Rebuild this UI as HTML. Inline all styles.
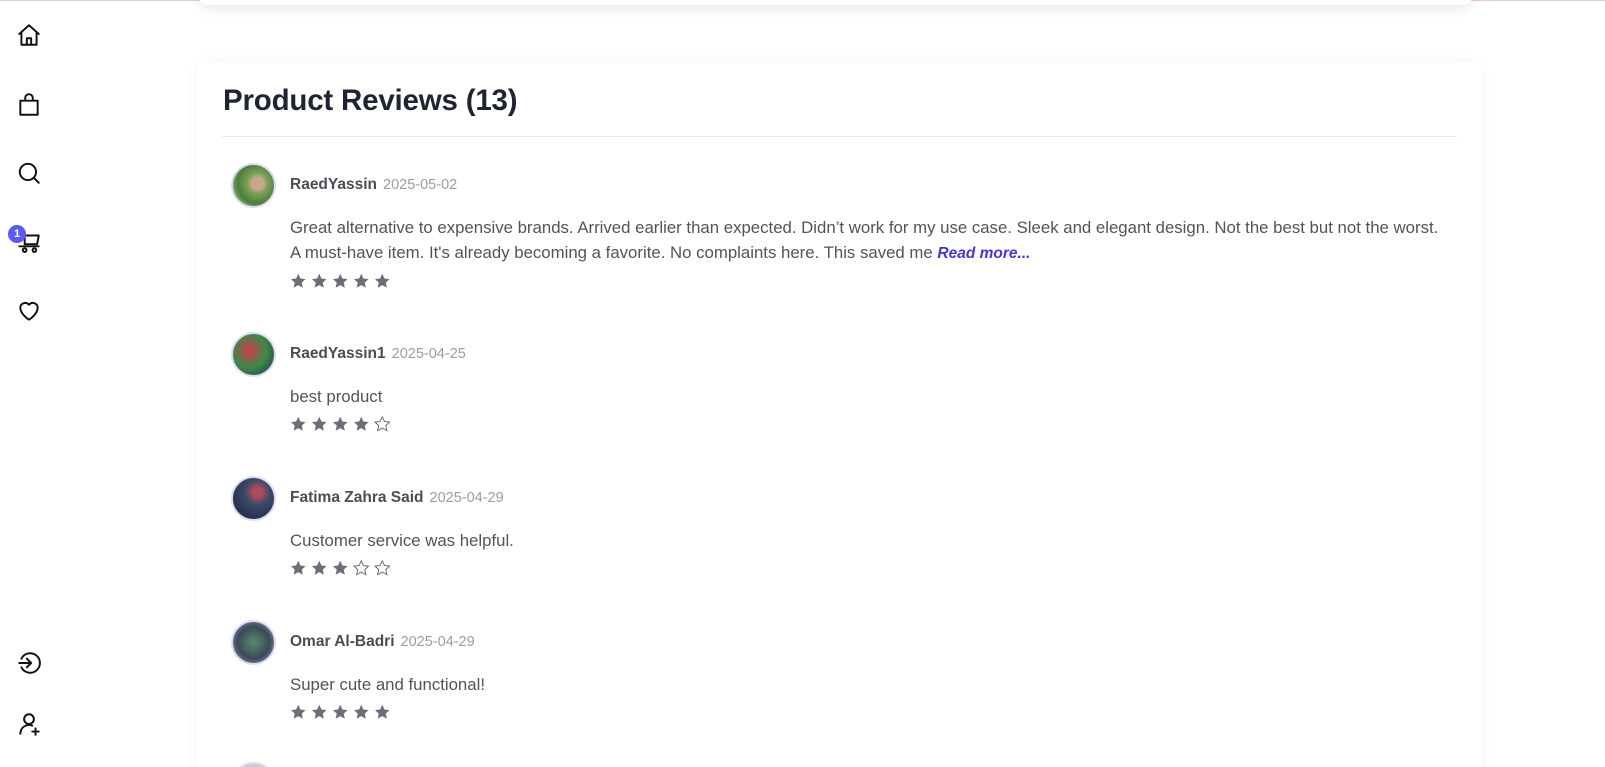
<!DOCTYPE html>
<html style="width:1605px;height:767px;overflow:hidden"><head><meta charset="utf-8"><style>
*{margin:0;padding:0;box-sizing:border-box}
body{width:1605px;height:767px;overflow:hidden;background:#fff;font-family:"Liberation Sans",sans-serif;position:relative}
#w{position:absolute;left:0;top:0;width:1605px;height:767px;overflow:hidden}
.topline{position:absolute;left:0;top:0;width:1605px;height:1px;background:#e8c9cf}
.topcard{position:absolute;left:198px;top:-20px;width:1275px;height:25px;background:#fff;border-radius:10px;box-shadow:0 4px 12px rgba(0,0,0,.09)}
.side svg{position:absolute;left:16px;width:26px;height:26px;fill:none;stroke:#111;stroke-width:1.8;stroke-linecap:round;stroke-linejoin:round}
.badge{position:absolute;left:8px;top:225px;width:18px;height:18px;border-radius:50%;background:#5b5bf0;color:#fff;font-size:11px;font-weight:bold;text-align:center;line-height:18px}
.card{position:absolute;left:197px;top:62px;width:1284px;height:730px;background:#fff;border-radius:8px;box-shadow:0 0 14px rgba(0,0,0,.045)}
h2{position:absolute;left:223px;top:84px;font-size:29.5px;font-weight:bold;color:#1f2433;letter-spacing:-.2px}
.hr{position:absolute;left:222px;top:136px;width:1235px;height:1px;background:#e9ebef}
.rev{position:absolute;left:231px}
.av{position:absolute;left:0;top:0;width:45px;height:45px;border-radius:50%;border:2px solid #dcdcf5}
.nm{position:absolute;left:59px;top:13px;font-size:15.5px;font-weight:bold;color:#4a4d55;white-space:nowrap}
.nm span{font-weight:normal;color:#9a9ca3;font-size:14.5px;margin-left:6px}
.tx{position:absolute;left:59px;top:52px;font-size:16.8px;color:#51545b;line-height:25px;white-space:nowrap}
.tx i{color:#4338ca;font-weight:bold;font-size:15.5px}
.st{position:absolute;left:59px;display:flex;gap:4.5px}
.st svg{width:16.5px;height:16.5px}
</style></head><body><div id="w">
<div class="topline"></div>
<div class="topcard"></div>
<div class="side">
<svg style="top:22px" viewBox="0 0 24 24"><path d="M3 11L12 3l9 8M5 9.5V21h14V9.5M10 21v-6h4v6"/></svg>
<svg style="top:92px" viewBox="0 0 24 24"><path d="M4 8h16v13H4zM8.5 8V5.5a3.5 3.5 0 0 1 7 0V8"/></svg>
<svg style="top:160px" viewBox="0 0 24 24"><circle cx="11" cy="11" r="7.5"/><path d="M16.5 16.5L21 21"/></svg>
<svg style="top:229px" viewBox="0 0 24 24"><path d="M8 6h13l-1.5 8H8zM3 16h18"/><circle cx="8" cy="19.5" r="1.7"/><circle cx="17" cy="19.5" r="1.7"/></svg>
<svg style="top:298px" viewBox="0 0 24 24"><path d="M12 20s-8-5-8-11a4.5 4.5 0 0 1 8-2.8A4.5 4.5 0 0 1 20 9c0 6-8 11-8 11z"/></svg>
<svg style="top:650px" viewBox="0 0 24 24"><path d="M5 8a9 9 0 1 1 0 8"/><path d="M3 12h11M10 8l4 4-4 4"/></svg>
<svg style="top:711px" viewBox="0 0 24 24"><circle cx="12" cy="7.5" r="4.5"/><path d="M4 21a8 8 0 0 1 11-7.5M18 16v6M15 19h6"/></svg>
</div>
<div class="badge">1</div>
<div class="card"></div>
<h2>Product Reviews (13)</h2>
<div class="hr"></div>

<svg width="0" height="0" style="position:absolute"><defs>
<path id="s" d="M8.25 .8l2.2 4.7 5.1.6-3.8 3.5 1.1 5.1-4.6-2.6-4.6 2.6 1.1-5.1L1 6.1l5.1-.6z"/></defs></svg>

<div class="rev" style="top:163px">
<div class="av" style="background:radial-gradient(circle at 60% 45%,#c9a88a 0 18%,#7aa35a 30%,#4e7d3a 60%,#cfd8c8)"></div>
<div class="nm">RaedYassin<span>2025-05-02</span></div>
<div class="tx">Great alternative to expensive brands. Arrived earlier than expected. Didn’t work for my use case. Sleek and elegant design. Not the best but not the worst.<br>A must-have item. It's already becoming a favorite. No complaints here. This saved me <i>Read more...</i></div>
<div class="st" style="top:110px">
<svg><use href="#s" fill="#6b6e78"/></svg><svg><use href="#s" fill="#6b6e78"/></svg><svg><use href="#s" fill="#6b6e78"/></svg><svg><use href="#s" fill="#6b6e78"/></svg><svg><use href="#s" fill="#6b6e78"/></svg></div>
</div>

<div class="rev" style="top:332px">
<div class="av" style="background:radial-gradient(circle at 40% 40%,#d23a4a,#3a8a4a 50%,#2a2a4a)"></div>
<div class="nm">RaedYassin1<span>2025-04-25</span></div>
<div class="tx">best product</div>
<div class="st" style="top:84px">
<svg><use href="#s" fill="#6b6e78"/></svg><svg><use href="#s" fill="#6b6e78"/></svg><svg><use href="#s" fill="#6b6e78"/></svg><svg><use href="#s" fill="#6b6e78"/></svg><svg><use href="#s" fill="none" stroke="#6b6e78"/></svg></div>
</div>

<div class="rev" style="top:476px">
<div class="av" style="background:radial-gradient(circle at 60% 35%,#b04a5a 0 12%,#3a4a6a 35%,#1a2238)"></div>
<div class="nm">Fatima Zahra Said<span>2025-04-29</span></div>
<div class="tx">Customer service was helpful.</div>
<div class="st" style="top:84px">
<svg><use href="#s" fill="#6b6e78"/></svg><svg><use href="#s" fill="#6b6e78"/></svg><svg><use href="#s" fill="#6b6e78"/></svg><svg><use href="#s" fill="none" stroke="#6b6e78"/></svg><svg><use href="#s" fill="none" stroke="#6b6e78"/></svg></div>
</div>

<div class="rev" style="top:620px">
<div class="av" style="background:radial-gradient(circle at 50% 50%,#5a8a6a,#3a4a5a 55%,#a8b4c8)"></div>
<div class="nm">Omar Al-Badri<span>2025-04-29</span></div>
<div class="tx">Super cute and functional!</div>
<div class="st" style="top:84px">
<svg><use href="#s" fill="#6b6e78"/></svg><svg><use href="#s" fill="#6b6e78"/></svg><svg><use href="#s" fill="#6b6e78"/></svg><svg><use href="#s" fill="#6b6e78"/></svg><svg><use href="#s" fill="#6b6e78"/></svg></div>
</div>
<div class="av" style="position:absolute;left:231px;top:762px;background:#ccc"></div>
</div></body></html>
